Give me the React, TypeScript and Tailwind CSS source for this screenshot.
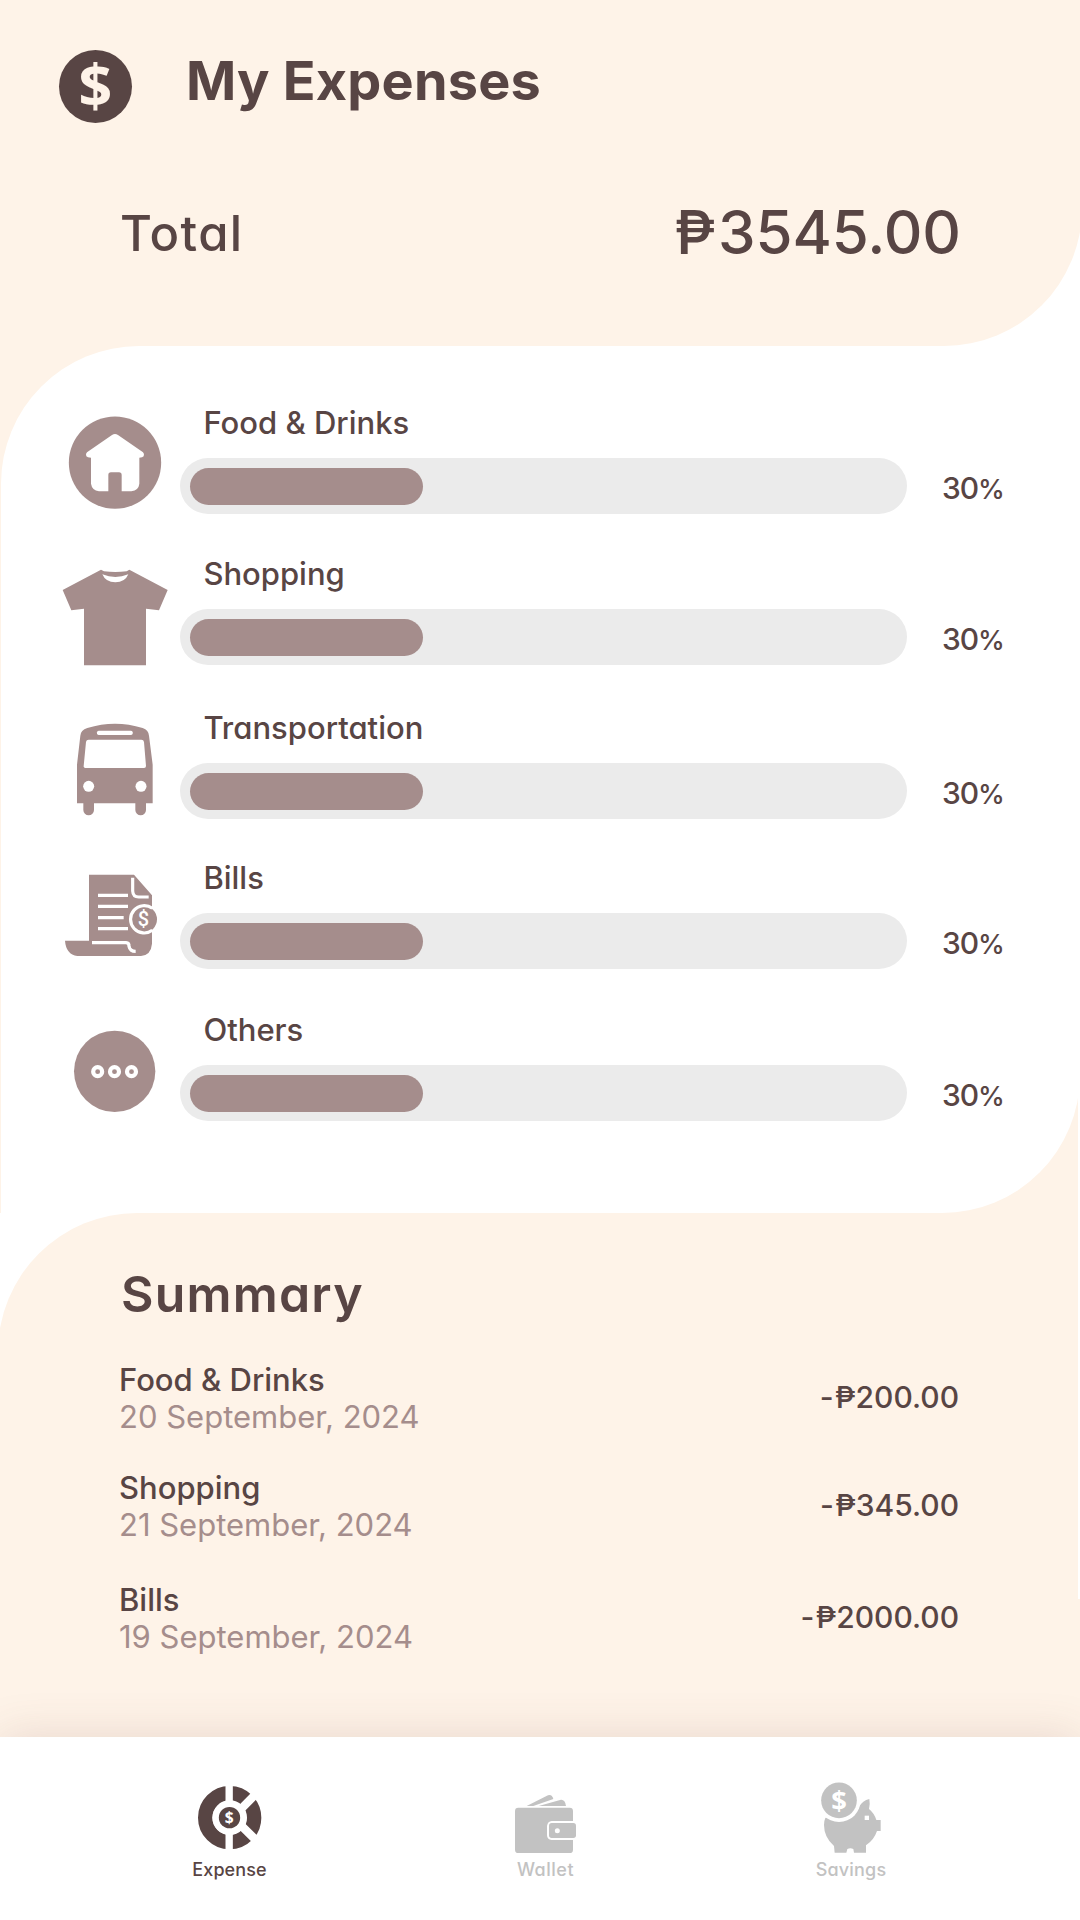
import type { ReactNode } from 'react';

type DollarProps = { x: number; y: number; size: number; className?: string };

function Dollar({ x, y, size, className = 'fill-white' }: DollarProps) {
  return (
    <text x={x} y={y} fontSize={size} textAnchor="middle" className={`font-['Open_Sans',sans-serif] font-bold ${className}`}>
      $
    </text>
  );
}

function HouseIcon() {
  return (
    <svg viewBox="60 37 336 336" className="size-28 shrink-0 overflow-visible fill-[#a58d8c]">
      <circle cx="225" cy="219" r="138.5" />
      <path
        className="fill-white"
        d="M216 136Q225 130 234 136L309 188Q314 193 311 200Q308 204 298 204V282Q296 302 274 305H245V256Q245 248 237 248H213Q205 248 205 256V305H177Q156 302 153 282V204Q142 204 139 200Q136 193 141 188Z"
      />
    </svg>
  );
}

function ShirtIcon() {
  return (
    <svg viewBox="60 490 336 336" className="size-28 shrink-0 overflow-visible fill-[#a58d8c]">
      <path d="M183 540L192 545Q226 549 260 545L268 540L383 601L357 662L318 657V827H132V657L94 662L68 601Z" />
      <path className="fill-white" d="M187 554Q226 570 265 554Q255 578 226 578Q197 578 187 554Z" />
    </svg>
  );
}

function BusIcon() {
  return (
    <svg viewBox="60 22 336 336" className="size-28 shrink-0 overflow-visible fill-[#a58d8c]">
      <path d="M111 311V195L121 108Q122 92 142 85Q225 59 308 85Q326 92 327 108L338 195V311H318V331A16 16 0 0 1 286 331V311H162V331A16 16 0 0 1 130 331V311Z" />
      <g className="fill-white">
        <rect x="171" y="93" width="107" height="13" rx="5" />
        <path d="M146 120H304Q311 120 312 127L318 199Q318 205 312 205H136Q130 205 131 199L138 127Q139 120 146 120Z" />
        <circle cx="146" cy="260" r="16.5" />
        <circle cx="303" cy="260" r="16.5" />
      </g>
    </svg>
  );
}

function BillIcon() {
  return (
    <svg viewBox="60 472 336 336" className="size-28 shrink-0 overflow-visible fill-[#a58d8c]">
      <path d="M147 525H282L336 587V732Q333 766 303 769H112Q78 764 75 723H147Z" />
      <g className="fill-none stroke-white" strokeWidth="9.5">
        <path d="M278 534V574Q279 592 296 592H326" />
        <path d="M174 587H264M174 620H264M174 654H251M174 687H264" />
        <path d="M156 729H258Q268 730 267 740Q270 755 287 755" />
      </g>
      <circle cx="310" cy="659" r="41" />
      <path className="fill-none stroke-white" strokeWidth="9.5" d="M337 626A41 41 0 1 0 337 692" />
      <text x="310" y="680" fontSize="60" textAnchor="middle" className="fill-white font-['Roboto',sans-serif] font-medium">
        $
      </text>
    </svg>
  );
}

function MoreIcon() {
  return (
    <svg viewBox="60 119 336 336" className="size-28 shrink-0 overflow-visible fill-[#a58d8c]">
      <circle cx="224" cy="306" r="122" />
      <g className="stroke-white" strokeWidth="12.5">
        <circle cx="173" cy="307" r="13.5" />
        <circle cx="223.5" cy="307" r="13.5" />
        <circle cx="274.5" cy="307" r="13.5" />
      </g>
    </svg>
  );
}

function ExpenseIcon() {
  return (
    <svg viewBox="-31.5 0 480 288" className="h-24 w-40">
      <circle cx="207.5" cy="173" r="73.5" className="fill-none stroke-[#584544]" strokeWidth="43" />
      <g className="stroke-white" strokeWidth="22">
        <path d="M206 70V276" />
        <path strokeWidth="25" d="M216 173L290 98M216 171L292 246" />
      </g>
      <circle cx="207" cy="173" r="51" className="fill-white" />
      <circle cx="207" cy="173" r="32" className="fill-[#584544]" />
      <Dollar x={206} y={189} size={47} />
    </svg>
  );
}

function WalletIcon() {
  return (
    <svg viewBox="-42 0 480 288" className="h-24 w-40 fill-[#c2c2c2]">
      <path d="M140 138L204 106Q216 102 220 117L160 138Z" />
      <path d="M176 138L243 119Q255 118 258 138Z" />
      <rect x="105" y="143" width="174" height="136" rx="10" />
      <path className="fill-white" d="M215 183H292V240H215Q201 238 201 225V198Q203 185 215 183Z" />
      <rect x="207" y="189" width="81" height="45" rx="8" />
      <circle cx="232" cy="212" r="7.5" className="fill-white" />
    </svg>
  );
}

function SavingsIcon() {
  return (
    <svg viewBox="-27 0 480 288" className="h-24 w-40 fill-[#c2c2c2]">
      <path d="M136 174L180 150L236 142Q248 121 268 117Q271 134 267 147Q283 160 289 180H302V213H291Q282 240 258 256V278H222L220 267Q211 263 202 267L199 278H164L162 258Q132 232 132 195Q132 182 136 174Z" />
      <circle cx="177" cy="121" r="65" className="fill-white" />
      <circle cx="177" cy="121" r="53.5" />
      <rect x="254" y="167" width="13" height="13" className="fill-white" />
      <Dollar x={177} y={149} size={82} />
    </svg>
  );
}

function Category({ icon, name, percent, className }: { icon: ReactNode; name: string; percent: number; className: string }) {
  return (
    <div className={`flex h-28 pl-[59.4px] ${className}`}>
      {icon}
      <div className="ml-2 w-[727px]">
        <p className="pt-px pl-[23.5px] text-[31px] leading-10">{name}</p>
        <div className="mt-[15px] flex h-14 items-center rounded-full bg-[#ebebeb] px-2.5">
          <div className="h-[37px] rounded-full bg-[#a58d8c]" style={{ width: `${(percent / 30) * 233}px` }} />
        </div>
      </div>
      <p className="mt-[66px] ml-[35px] text-[30px] leading-10 tracking-[-1px]">
        {percent}
        <span className="text-[27px]">%</span>
      </p>
    </div>
  );
}

function Entry({ name, date, amount, className = '' }: { name: string; date: string; amount: string; className?: string }) {
  return (
    <div className={`flex items-center justify-between text-[31px] leading-[37px] ${className}`}>
      <div>
        <p>{name}</p>
        <p className="font-[440] text-[#a58d8c]">{date}</p>
      </div>
      <p className="text-[30px]">
        <span className="tracking-[1.5px]">-</span>
        {amount}
      </p>
    </div>
  );
}

function Tab({ icon, label, className }: { icon: ReactNode; label: string; className: string }) {
  return (
    <div className={`flex w-40 flex-col items-center text-[18px] leading-[27px] ${className}`}>
      {icon}
      <span>{label}</span>
    </div>
  );
}

export default function App() {
  return (
    <div className="flex h-[1920px] w-[1080px] flex-col overflow-hidden bg-white font-['Inter',sans-serif] font-medium text-[#584544] [font-feature-settings:'cv11']">
      <header className="-mr-0.5 h-[346px] shrink-0 rounded-br-[138px] bg-[#fef3e8] pt-[50px]">
        <div className="flex items-start pl-[59px]">
          <svg viewBox="0 0 73 73" className="size-[73px] overflow-visible fill-[#584544]">
            <circle cx="36.5" cy="36.5" r="36.5" />
            <Dollar x={36.3} y={57} size={59} className="fill-[#fef3e8]" />
          </svg>
          <h1 className="ml-[54px] pt-px text-[54px] leading-[60px] font-bold tracking-[0.2px]">My Expenses</h1>
        </div>
        <div className="mt-[73px] flex items-center justify-between pr-[121px] pl-[120px]">
          <span className="pt-[3px] text-[49px] leading-[60px] tracking-[1.4px]">Total</span>
          <span className="text-[60px] leading-[72px] tracking-[-0.1px]">
            <span className="tracking-[2.5px]">₱</span>3545.00
          </span>
        </div>
      </header>

      <div className="mr-0.5 h-[867px] shrink-0 bg-[#fef3e8]">
        <main className="-mr-0.5 ml-[0.5px] h-full rounded-tl-[138px] rounded-br-[138px] bg-white pt-[56.4px]">
          <Category icon={<HouseIcon />} name="Food & Drinks" percent={30} className="" />
          <Category icon={<ShirtIcon />} name="Shopping" percent={30} className="mt-[39px]" />
          <Category icon={<BusIcon />} name="Transportation" percent={30} className="mt-[42px]" />
          <Category icon={<BillIcon />} name="Bills" percent={30} className="mt-[37.7px]" />
          <Category icon={<MoreIcon />} name="Others" percent={30} className="mt-[40.4px]" />
        </main>
      </div>

      <div className="flex h-[524px] shrink-0">
        <section className="-ml-0.5 w-[1080px] shrink-0 rounded-tl-[139px] bg-[#fef3e8] pt-[50.5px] pr-[119px] pl-[121px]">
          <h2 className="ml-[2px] text-[50px] leading-[60px] font-semibold tracking-[1.2px]">Summary</h2>
          <Entry name="Food & Drinks" date="20 September, 2024" amount="₱200.00" className="mt-[37px]" />
          <Entry name="Shopping" date="21 September, 2024" amount="₱345.00" className="mt-[34px]" />
          <Entry name="Bills" date="19 September, 2024" amount="₱2000.00" className="mt-[38px]" />
        </section>
        <div className="w-0.5 pt-[386px]">
          <div className="h-full bg-[#fef3e8]" />
        </div>
      </div>

      <nav className="flex grow bg-white pt-[23px] pl-[149.5px] shadow-[0_0_44px_rgba(120,70,65,0.16)]">
        <Tab icon={<ExpenseIcon />} label="Expense" className="tracking-[0.1px]" />
        <Tab icon={<WalletIcon />} label="Wallet" className="ml-[156px] tracking-[0.5px] text-[#c2c2c2]" />
        <Tab icon={<SavingsIcon />} label="Savings" className="ml-[145.5px] tracking-[0.2px] text-[#c2c2c2]" />
      </nav>
    </div>
  );
}
